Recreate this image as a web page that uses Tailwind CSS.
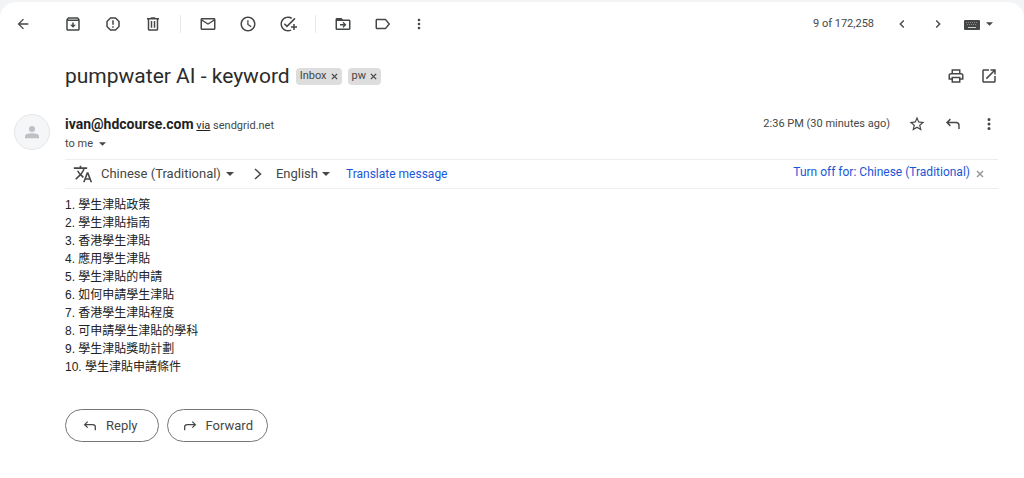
<!DOCTYPE html>
<html lang="en">
<head>
  <meta charset="UTF-8" />
  <meta name="viewport" content="width=device-width, initial-scale=1" />
  <title>pumpwater AI - keyword</title>
  <script src="https://cdn.jsdelivr.net/npm/@tailwindcss/browser@4"></script>
</head>
<body class="min-h-screen flex flex-col bg-[#f3f4f6] pt-[2px] font-['Roboto','Noto_Sans_CJK_TC',sans-serif] text-[#444746]">

  <!-- Shared icons -->
  <svg class="hidden">
    <symbol id="caret" viewBox="0 0 8 4"><path d="M0 0h8L4 4z" /></symbol>
    <symbol id="more" viewBox="0 0 24 24"><path d="M12 8a2 2 0 1 0 0-4 2 2 0 0 0 0 4zm0 2a2 2 0 1 0 0 4 2 2 0 0 0 0-4zm0 6a2 2 0 1 0 0 4 2 2 0 0 0 0-4z" /></symbol>
    <symbol id="close" viewBox="0 0 8 8"><path d="M1 1l6 6M7 1L1 7" fill="none" stroke="currentColor" stroke-width="1.5" /></symbol>
    <symbol id="reply" viewBox="0 0 24 24"><path d="M8.500 5.500L4 10l4.500 4.500M4 10h12q4 0 4 4v4.500" fill="none" stroke="currentColor" stroke-width="1.9" /></symbol>
  </svg>

  <main class="grow rounded-t-2xl bg-white">

    <!-- Toolbar -->
    <header class="h-11 flex items-center justify-between pl-[3px] pr-[31px]">
      <div class="flex items-center">
        <button aria-label="Back" class="w-10 h-10 mr-[10px] flex items-center justify-center"><svg class="w-4 h-4 fill-current" viewBox="0 0 24 24"><path d="M20 11H7.830l5.590-5.590L12 4l-8 8 8 8 1.410-1.410L7.830 13H20v-2z" /></svg></button>
        <button aria-label="Archive" class="w-10 h-10 flex items-center justify-center"><svg class="w-[18px] h-[18px] fill-current" viewBox="0 0 24 24"><path d="M20.540 5.230l-1.390-1.680C18.880 3.210 18.470 3 18 3H6c-.470 0-.880.210-1.160.550L3.460 5.230C3.170 5.570 3 6.020 3 6.500V19c0 1.100.900 2 2 2h14c1.100 0 2-.900 2-2V6.500c0-.480-.170-.930-.460-1.270zM6.240 5h11.520l.830 1H5.420l.820-1zM5 19V8h14v11H5zm8-9h-2v3H8l4 4 4-4h-3v-3z" /></svg></button>
        <button aria-label="Report spam" class="w-10 h-10 flex items-center justify-center"><svg class="w-[18px] h-[18px] fill-current" viewBox="0 0 24 24"><path d="M15.730 3H8.270L3 8.270v7.460L8.270 21h7.460L21 15.730V8.270L15.730 3zM19 14.900L14.900 19H9.100L5 14.900V9.100L9.100 5h5.800L19 9.100v5.800zM11 7h2v6h-2zM11 15h2v2h-2z" /></svg></button>
        <button aria-label="Delete" class="w-10 h-10 flex items-center justify-center"><svg class="w-[18px] h-[18px] fill-current" viewBox="0 0 24 24"><path d="M15 4V3H9v1H4v2h1v13c0 1.100.900 2 2 2h10c1.100 0 2-.900 2-2V6h1V4h-5zm2 15H7V6h10v13zM9 8h2v9H9zm4 0h2v9h-2z" /></svg></button>
        <div class="w-px h-[18px] mx-[7px] bg-[#e6e8eb]"></div>
        <button aria-label="Mark as unread" class="w-10 h-10 flex items-center justify-center"><svg class="w-[18px] h-[18px] fill-current" viewBox="0 0 24 24"><path d="M20 4H4c-1.100 0-2 .900-2 2v12c0 1.100.900 2 2 2h16c1.100 0 2-.900 2-2V6c0-1.100-.900-2-2-2zm0 14H4V8l8 5 8-5v10zm-8-7L4 6h16l-8 5z" /></svg></button>
        <button aria-label="Snooze" class="w-10 h-10 flex items-center justify-center"><svg class="w-[18px] h-[18px] fill-current" viewBox="0 0 24 24"><path d="M12 2C6.500 2 2 6.500 2 12s4.500 10 10 10 10-4.500 10-10S17.500 2 12 2zm0 18c-4.400 0-8-3.600-8-8s3.600-8 8-8 8 3.600 8 8-3.600 8-8 8zm.700-13H11v6l4.700 3.200.900-1.400-3.900-2.600z" /></svg></button>
        <button aria-label="Add to tasks" class="w-10 h-10 flex items-center justify-center"><svg class="w-[18px] h-[18px] fill-current" viewBox="0 0 24 24"><path d="M22 5.180L10.590 16.600l-4.240-4.240 1.410-1.410 2.830 2.830 10-10L22 5.180zM12 20c-4.410 0-8-3.590-8-8s3.590-8 8-8c1.570 0 3.040.460 4.280 1.250l1.450-1.450C16.100 2.670 14.130 2 12 2 6.480 2 2 6.480 2 12s4.480 10 10 10c1.730 0 3.360-.440 4.780-1.220l-1.500-1.500c-1 .460-2.110.720-3.280.720zm7-5h-3v2h3v3h2v-3h3v-2h-3v-3h-2v3z" /></svg></button>
        <div class="w-px h-[18px] mx-[7px] bg-[#e6e8eb]"></div>
        <button aria-label="Move to" class="w-10 h-10 flex items-center justify-center"><svg class="w-[18px] h-[18px] fill-current" viewBox="0 0 24 24"><path d="M20 6h-8l-2-2H4c-1.100 0-2 .900-2 2v12c0 1.100.900 2 2 2h16c1.100 0 2-.900 2-2V8c0-1.100-.900-2-2-2zm0 12H4V8h16v10zm-7.500-1l4-4-4-4-1.200 1.200 1.800 1.800H8v2h5.100l-1.800 1.800z" /></svg></button>
        <button aria-label="Labels" class="w-10 h-10 flex items-center justify-center"><svg class="w-[18px] h-[18px] fill-current" viewBox="0 0 24 24"><path d="M16.630 5.840C16.270 5.330 15.670 5 15 5H4c-1.100 0-2 .900-2 2v10c0 1.100.900 2 2 2h11c.670 0 1.270-.330 1.630-.840L21.500 12l-4.870-6.160zM15 17H4V7h11l4 5-4 5z" /></svg></button>
        <button aria-label="More" class="w-8 h-10 flex items-center justify-center"><svg class="w-4 h-4 fill-current"><use href="#more" /></svg></button>
      </div>
      <div class="flex items-center">
        <span class="mr-[10px] text-[11px]">9 of 172,258</span>
        <button aria-label="Newer" class="w-9 h-9 flex items-center justify-center"><svg class="w-4 h-4 fill-current" viewBox="0 0 24 24"><path d="M15.410 7.410L14 6l-6 6 6 6 1.410-1.410L10.830 12z" /></svg></button>
        <button aria-label="Older" class="w-9 h-9 flex items-center justify-center"><svg class="w-4 h-4 fill-current" viewBox="0 0 24 24"><path d="M10 6L8.590 7.410 13.170 12l-4.580 4.590L10 18l6-6z" /></svg></button>
        <button aria-label="Input tools" class="ml-2 h-9 flex items-center gap-[6px]">
          <svg class="w-4 h-[18px]" viewBox="0 0 16 18"><rect x="0" y="5" width="16" height="10" rx="1" class="fill-current" /><path d="M2 7.500h12M3 9.500h10" stroke="#888" stroke-dasharray="1 1" /><path d="M4 12.500h8" stroke="#ccc" /></svg>
          <svg class="w-[7px] h-1 fill-current"><use href="#caret" /></svg>
        </button>
      </div>
    </header>

    <!-- Subject -->
    <div class="mt-[18px] h-6 flex items-center justify-between pl-[65px] pr-[26px]">
      <div class="flex items-center gap-[6px]">
        <h1 class="text-[21px] leading-6 text-[#2b2b2b]">pumpwater AI - keyword</h1>
        <span class="h-[17px] flex items-center gap-1 px-1 rounded bg-[#ddd] text-[11px]">Inbox<button aria-label="Remove Inbox"><svg class="w-[7px] h-[7px]"><use href="#close" /></svg></button></span>
        <span class="h-[17px] flex items-center gap-1 px-1 rounded bg-[#ddd] text-[11px]">pw<button aria-label="Remove pw"><svg class="w-[7px] h-[7px]"><use href="#close" /></svg></button></span>
      </div>
      <div class="flex items-center gap-[15px]">
        <button aria-label="Print"><svg class="w-[18px] h-[18px] fill-current" viewBox="0 0 24 24"><path d="M19 8h-1V3H6v5H5c-1.660 0-3 1.340-3 3v6h4v4h12v-4h4v-6c0-1.660-1.340-3-3-3zM8 5h8v3H8V5zm8 14H8v-4h8v4zm2-4v-2H6v2H4v-4c0-.550.450-1 1-1h14c.550 0 1 .450 1 1v4h-2z" /></svg></button>
        <button aria-label="Open in new window"><svg class="w-[18px] h-[18px] fill-current" viewBox="0 0 24 24"><path d="M19 19H5V5h7V3H5c-1.110 0-2 .900-2 2v14c0 1.100.890 2 2 2h14c1.100 0 2-.900 2-2v-7h-2v7zM14 3v2h3.590l-9.830 9.830 1.410 1.410L19 6.410V10h2V3h-7z" /></svg></button>
      </div>
    </div>

    <article class="flex pl-[14px] pr-[26px] pt-[26px]">
      <div class="w-9 h-9 mr-[15px] shrink-0 flex items-center justify-center rounded-full border border-[#e4e6e9] bg-[#f4f6f8]">
        <svg class="w-[14px] h-[14px] fill-[#bdc1c6]" viewBox="0 0 16 16"><circle cx="8" cy="4.500" r="3.500" /><path d="M0 15v-2c0-2.500 3-3.500 8-3.500s8 1 8 3.500v2z" /></svg>
      </div>

      <div class="grow">
        <!-- Sender -->
        <div class="flex items-start justify-between">
          <div>
            <p class="text-[11px] leading-5"><span class="text-[14px] font-bold text-[#1f1f1f]">ivan@hdcourse.com</span> <a href="#" class="underline text-[#222]">via</a> sendgrid.net</p>
            <button class="flex items-center gap-[6px] text-[11px] leading-4">to me <svg class="w-[7px] h-1 fill-current"><use href="#caret" /></svg></button>
          </div>
          <div class="h-5 flex items-center gap-[18px]">
            <time class="text-[11px]">2:36 PM (30 minutes ago)</time>
            <button aria-label="Star"><svg class="w-[18px] h-[18px] fill-current" viewBox="0 0 24 24"><path d="M22 9.240l-7.190-.620L12 2 9.190 8.630 2 9.240l5.460 4.730L5.820 21 12 17.270 18.180 21l-1.630-7.030L22 9.240zM12 15.400l-3.760 2.270 1-4.280-3.320-2.880 4.380-.380L12 6.100l1.710 4.040 4.380.380-3.320 2.880 1 4.280L12 15.400z" /></svg></button>
            <button aria-label="Reply"><svg class="w-[18px] h-[18px]"><use href="#reply" /></svg></button>
            <button aria-label="More options"><svg class="w-[18px] h-[18px] fill-current"><use href="#more" /></svg></button>
          </div>
        </div>

        <!-- Translate bar -->
        <div class="mt-[7px] h-[30px] flex items-center justify-between border-y border-[#eceef0] pl-2 pr-[14px]">
          <div class="flex items-center">
            <svg class="w-5 h-5 mr-2 fill-current" viewBox="0 0 24 24"><path d="M12.870 15.070l-2.540-2.510.030-.030c1.740-1.940 2.980-4.170 3.710-6.530H17V4h-7V2H8v2H1v1.990h11.170C11.500 7.920 10.440 9.750 9 11.350 8.070 10.320 7.300 9.190 6.690 8h-2c.730 1.630 1.730 3.170 2.980 4.560l-5.090 5.020L4 19l5-5 3.110 3.110.760-2.040zM18.500 10h-2L12 22h2l1.120-3h4.750L21 22h2l-4.500-12zm-2.620 7l1.620-4.330L19.120 17h-3.240z" /></svg>
            <select aria-label="Source language" class="field-sizing-content appearance-none text-[13px]"><option>Chinese (Traditional)</option></select>
            <svg class="w-2 h-1 ml-[5px] fill-current"><use href="#caret" /></svg>
            <svg class="w-2 h-3 ml-5 mr-[14px]" viewBox="0 0 8 12"><path d="M1 1l5.500 5L1 11" fill="none" stroke="currentColor" stroke-width="1.500" /></svg>
            <select aria-label="Target language" class="field-sizing-content appearance-none text-[13px]"><option>English</option></select>
            <svg class="w-2 h-1 ml-1 mr-4 fill-current"><use href="#caret" /></svg>
            <a href="#" class="text-[12px] text-[#1a56d6]">Translate message</a>
          </div>
          <div class="flex items-center gap-[6px] pb-1">
            <a href="#" class="text-[12px] text-[#1a56d6]">Turn off for: Chinese (Traditional)</a>
            <button aria-label="Close" class="pt-1 text-[#999]"><svg class="w-2 h-2"><use href="#close" /></svg></button>
          </div>
        </div>

        <!-- Message -->
        <div lang="zh-Hant" class="mt-[7px] font-['Liberation_Sans','Noto_Sans_CJK_TC',sans-serif] text-[12px] leading-[18px] text-[#222]">
          <p>1. 學生津貼政策</p>
          <p>2. 學生津貼指南</p>
          <p>3. 香港學生津貼</p>
          <p>4. 應用學生津貼</p>
          <p>5. 學生津貼的申請</p>
          <p>6. 如何申請學生津貼</p>
          <p>7. 香港學生津貼程度</p>
          <p>8. 可申請學生津貼的學科</p>
          <p>9. 學生津貼獎助計劃</p>
          <p>10. 學生津貼申請條件</p>
        </div>

        <div class="mt-[33px] flex gap-2">
          <button class="h-[33px] flex items-center gap-2 px-4 rounded-full border border-[#747775] text-[13px]"><svg class="w-4 h-4"><use href="#reply" /></svg><span class="pr-1">Reply</span></button>
          <button class="h-[33px] flex items-center gap-2 px-[14px] rounded-full border border-[#747775] text-[13px]"><svg class="w-4 h-4 -scale-x-100"><use href="#reply" /></svg>Forward</button>
        </div>
      </div>
    </article>
  </main>

</body>
</html>
